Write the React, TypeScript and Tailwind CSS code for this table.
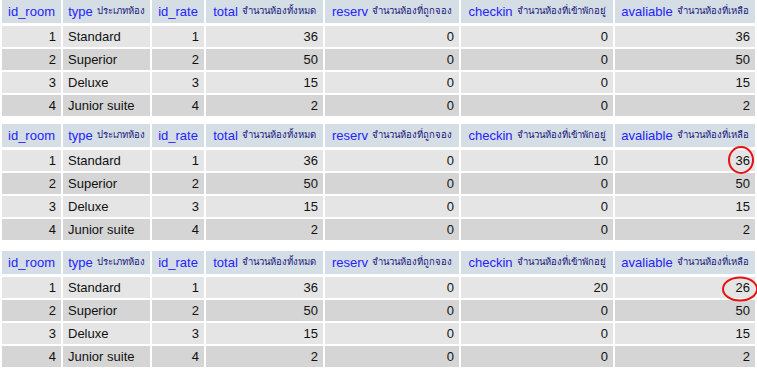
import React from "react";

type Row = [number, string, number, number, number, number, number];

const headers: [string, string][] = [
  ["id_room", ""],
  ["type", "ประเภทห้อง"],
  ["id_rate", ""],
  ["total", "จำนวนห้องทั้งหมด"],
  ["reserv", "จำนวนห้องที่ถูกจอง"],
  ["checkin", "จำนวนห้องที่เข้าพักอยู่"],
  ["avaliable", "จำนวนห้องที่เหลือ"],
];

const base: Row[] = [
  [1, "Standard", 1, 36, 0, 0, 36],
  [2, "Superior", 2, 50, 0, 0, 50],
  [3, "Deluxe", 3, 15, 0, 0, 15],
  [4, "Junior suite", 4, 2, 0, 0, 2],
];

const t2: Row[] = base.map((r, i) => (i === 0 ? [1, "Standard", 1, 36, 0, 10, 36] : r));
const t3: Row[] = base.map((r, i) => (i === 0 ? [1, "Standard", 1, 36, 0, 20, 26] : r));

const font = { fontFamily: '"Liberation Sans", Arial, "Noto Sans", sans-serif' };

function Table({ rows }: { rows: Row[] }) {
  return (
    <div className="flex flex-col pl-[2px]">
      <div className="grid grid-cols-[59px_87px_52px_117px_134px_152px_140px] gap-x-[2px]">
        {headers.map(([h, s], i) => (
          <div
            key={i}
            className="h-[23px] bg-[#d5dde5] flex items-center justify-center whitespace-nowrap overflow-hidden"
          >
            <span className="text-[13px] text-[#2424ff]">{h}</span>
            {s && <span className="text-[9.5px] text-[#15157a] ml-[4px]">{s}</span>}
          </div>
        ))}
      </div>
      <div className="mt-[3px] flex flex-col gap-y-[2px]">
        {rows.map((r, ri) => (
          <div
            key={ri}
            className="grid grid-cols-[59px_87px_52px_117px_134px_152px_140px] gap-x-[2px]"
          >
            {r.map((c, ci) => (
              <div
                key={ci}
                className={`h-[21px] flex items-center px-[5px] text-[13px] text-[#111] whitespace-nowrap ${
                  ri % 2 === 0 ? "bg-[#e5e5e5]" : "bg-[#d5d5d5]"
                } ${ci === 1 ? "justify-start" : "justify-end"}`}
              >
                {c}
              </div>
            ))}
          </div>
        ))}
      </div>
    </div>
  );
}

export default function App() {
  return (
    <div className="relative w-[757px] h-[376px] bg-white overflow-hidden" style={font}>
      <div className="flex flex-col">
        <Table rows={base} />
        <div className="h-[8px]" />
        <Table rows={t2} />
        <div className="h-[11px]" />
        <Table rows={t3} />
      </div>
      <svg className="absolute left-0 top-0 pointer-events-none" width="757" height="376">
        <ellipse cx="741" cy="160" rx="12" ry="13" fill="none" stroke="#e81010" strokeWidth="2" />
        <ellipse cx="740" cy="289" rx="17" ry="11.5" fill="none" stroke="#e81010" strokeWidth="2" />
      </svg>
    </div>
  );
}
